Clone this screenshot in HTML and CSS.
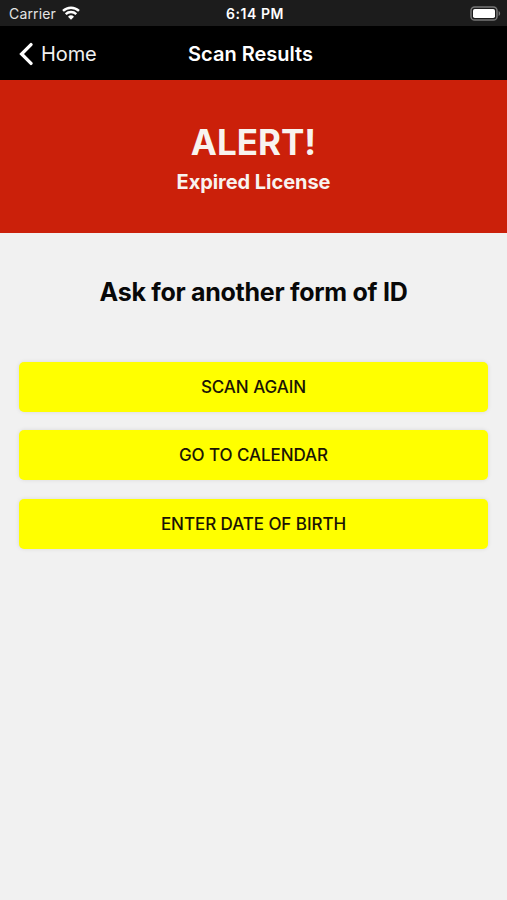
FILE: index.html
```html
<!DOCTYPE html>
<html lang="en">
<head>
	<meta charset="utf-8">
	<title>Scan Results</title>
	<meta name="viewport" content="width=device-width, initial-scale=1">

	<link rel="stylesheet" href="styles.css">
</head>
<body>
	<div class="status-bar">
		<div class="carrier">
			<span>Carrier</span>
			<svg class="wifi" viewBox="0 0 18 14" width="18" height="14">
				<path d="M1 4.9a11.6 11.6 0 0 1 16 0M3.7 8.1a7.8 7.8 0 0 1 10.6 0" fill="none" stroke="#fff" stroke-width="2.4"/>
				<path d="M9 13.8L6 10.7a4.3 4.3 0 0 1 6 0z" fill="#fff"/>
			</svg>
		</div>
		<div class="time">6:14 PM</div>
		<div class="battery">
			<svg viewBox="0 0 31 15" width="31" height="15">
				<rect x="1" y="1" width="26" height="13" rx="3.6" fill="none" stroke="#777" stroke-width="1.5"/>
				<rect x="3" y="3" width="22" height="9" rx="1.8" fill="#fff"/>
				<path d="M28.6 5v5c2-.8 2-4.2 0-5z" fill="#777"/>
			</svg>
		</div>
	</div>

	<div class="nav-bar">
		<a class="back" href="#">
			<svg viewBox="0 0 14 24" width="14" height="24">
				<path d="M12 2.6L2.6 12l9.4 9.4" fill="none" stroke="#fff" stroke-width="3.3" stroke-linecap="round"/>
			</svg>
			<span>Home</span>
		</a>
		<h1 class="nav-title">Scan Results</h1>
	</div>

	<div class="alert">
		<h2 class="alert-title">ALERT!</h2>
		<p class="alert-text">Expired License</p>
	</div>

	<div class="content">
		<h3 class="message">Ask for another form of ID</h3>
		<div class="buttons">
			<button class="btn" type="button">SCAN AGAIN</button>
			<button class="btn" type="button">GO TO CALENDAR</button>
			<button class="btn" type="button">ENTER DATE OF BIRTH</button>
		</div>
	</div>
</body>
</html>
```
FILE: styles.css
```css
* {
	box-sizing: border-box;
}

body {
	margin: 0;
	min-height: 900px;
	background-color: #f1f1f1;
	color: #080808;
	font-family: Inter, "Liberation Sans", sans-serif;
}

h1, h2, h3, p {
	margin: 0;
}

.status-bar {
	display: grid;
	grid-template-columns: 1fr auto 1fr;
	align-items: center;
	height: 26px;
	padding: 0 6px 0 9px;
	background-color: #1c1c1c;
	color: #fff;
	font-size: 14px;
}
.carrier {
	display: flex;
	align-items: center;
	gap: 6px;
	color: #e4e4e4;
	letter-spacing: 0.15px;
}
.time {
	font-weight: 600;
	letter-spacing: 0.55px;
}
.battery {
	display: flex;
	justify-content: flex-end;
}

.nav-bar {
	display: grid;
	grid-template-columns: 1fr auto 1fr;
	align-items: center;
	height: 54px;
	padding: 1px 25px 0 19px;
	background-color: #000;
	color: #fff;
}
.back {
	display: flex;
	align-items: center;
	gap: 8px;
	color: #f0f0f0;
	font-size: 20px;
	letter-spacing: -0.1px;
	text-decoration: none;
}
.nav-title {
	font-size: 20px;
	font-weight: 600;
}

.alert {
	height: 153px;
	padding-top: 40px;
	background-color: #cb200a;
	color: #f8f3ef;
	text-align: center;
}
.alert-title {
	font-size: 35px;
	line-height: 44px;
}
.alert-text {
	font-size: 20px;
	font-weight: 700;
	letter-spacing: -0.05px;
	line-height: 36px;
}

.content {
	padding: 42px 19px 0;
}
.message {
	font-size: 25px;
	letter-spacing: -0.27px;
	line-height: 34px;
	text-align: center;
}
.buttons {
	display: flex;
	flex-direction: column;
	gap: 18.4px;
	margin-top: 53px;
}
.btn {
	height: 50px;
	border: 0;
	border-radius: 5px;
	background-color: #ff0;
	box-shadow: 0 0 4px rgba(0, 0, 0, 0.1);
	color: #1a1405;
	font-family: inherit;
	font-size: 17px;
	font-weight: 500;
	letter-spacing: -0.06px;
}
```
